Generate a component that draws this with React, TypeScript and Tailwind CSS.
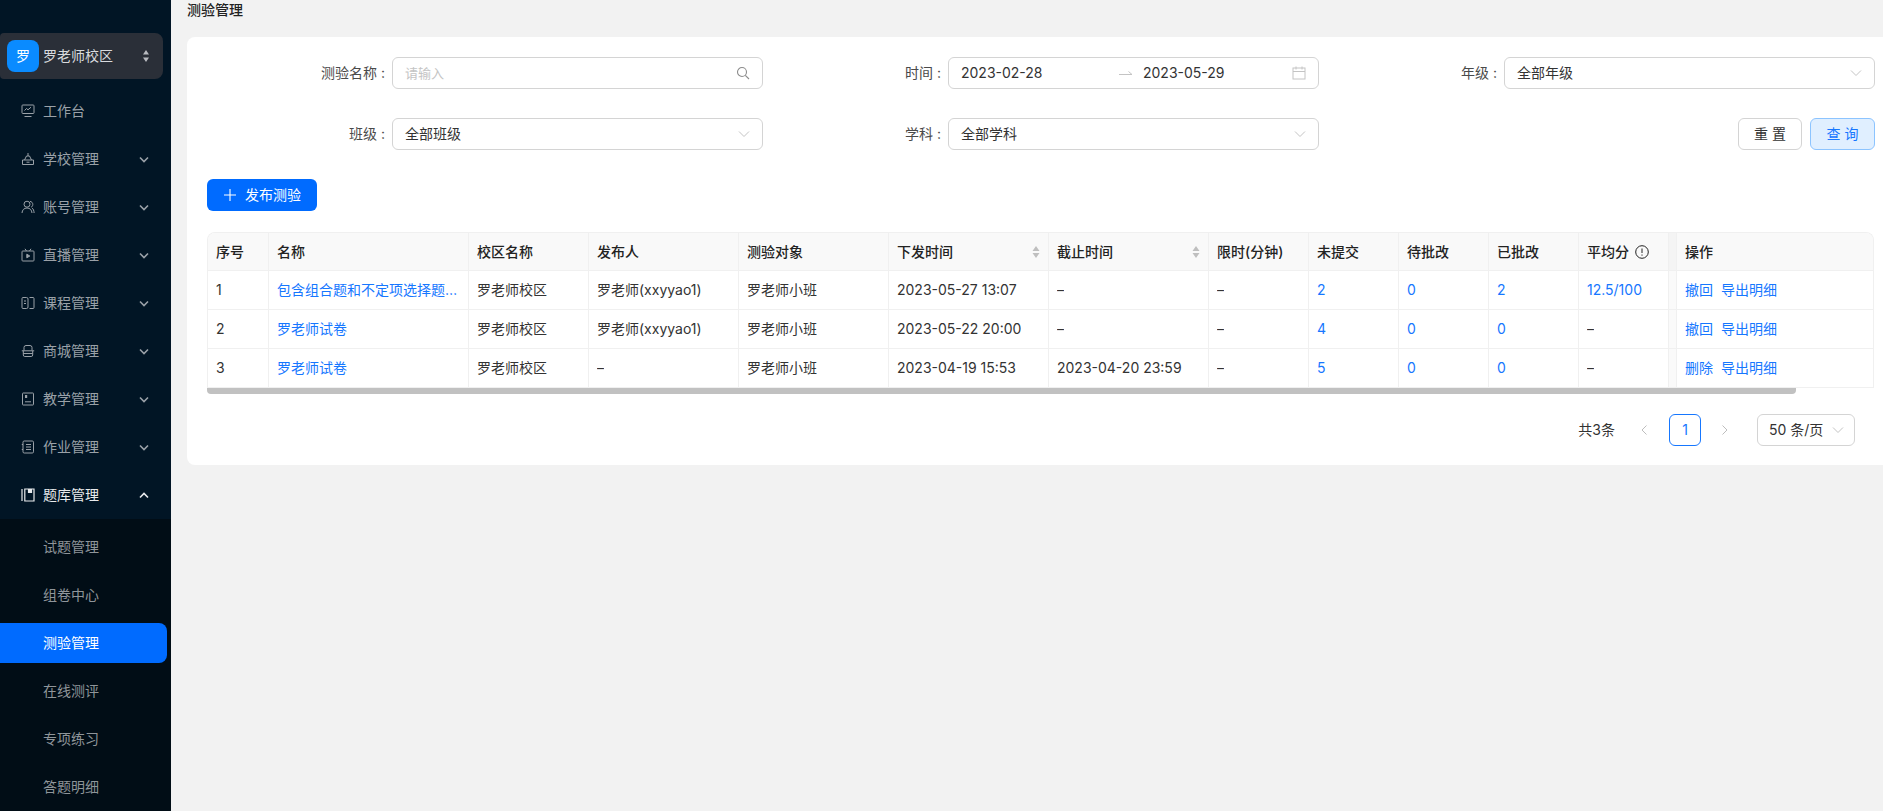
import { ReactNode } from "react";

const FONT = "font-['Inter','Noto_Sans_CJK_SC',sans-serif]";

const Ico = ({ children }: { children: ReactNode }) => (
  <svg width="14" height="14" viewBox="0 0 14 14" fill="none" stroke="currentColor" strokeWidth="1" className="shrink-0">
    {children}
  </svg>
);

const icons: Record<string, ReactNode> = {
  desk: (
    <Ico>
      <rect x="1" y="1" width="12" height="8.5" rx="0.8" />
      <path d="M3.5 6.5 5.5 4.5 7 5.8 10 3.2M3.5 12.5h7" />
    </Ico>
  ),
  school: (
    <Ico>
      <path d="M1.5 8h11v4.5h-11zM3.5 8 5.5 4h3l2 4M7 4V1M5.5 10.2h3" />
    </Ico>
  ),
  account: (
    <Ico>
      <circle cx="6" cy="4.2" r="3" />
      <path d="M1 13c.2-3 2-5 5-5s4.800 2 5 5M9 1.400c1.800.3 2.800 1.500 2.800 3s-.8 2.400-1.800 2.900M11 8c1.300.9 2 2.700 2.100 5" />
    </Ico>
  ),
  live: (
    <Ico>
      <rect x="1" y="3" width="12" height="10" rx="0.8" />
      <path d="M4 .8 5.500 3M10 .8 8.500 3" />
      <path d="M5.800 6.200 8.800 8 5.800 9.800z" fill="currentColor" />
    </Ico>
  ),
  course: (
    <Ico>
      <path d="M5.500 1.500H2a1 1 0 0 0-1 1v9a1 1 0 0 0 1 1h3.500a1.500 1.500 0 0 0 1.500-1.500V3A1.500 1.500 0 0 0 5.500 1.500zM8.500 1.500H12a1 1 0 0 1 1 1v9a1 1 0 0 1-1 1H8.500M3 5h2M3 7.500h2" />
    </Ico>
  ),
  shop: (
    <Ico>
      <path d="M3 6.500V3.500a2 2 0 0 1 2-2h4a2 2 0 0 1 2 2v3M.8 6.800h12.400M2.300 6.800v4.200a1.500 1.500 0 0 0 1.500 1.500h6.400a1.500 1.500 0 0 0 1.500-1.500V6.800M2.300 9.500h9.400" />
    </Ico>
  ),
  teach: (
    <Ico>
      <rect x="1.500" y="1" width="11" height="12" rx="0.6" />
      <path d="M4 9.800h6" />
      <rect x="4" y="3" width="2.200" height="3" fill="currentColor" stroke="none" />
    </Ico>
  ),
  homework: (
    <Ico>
      <rect x="2" y="1" width="10.500" height="12" rx="1.200" />
      <path d="M5 4.500h5M5 7h5M5 9.500h5M.8 4.500H2M.8 9.500H2" />
    </Ico>
  ),
  bank: (
    <Ico>
      <path d="M1 1v12" strokeWidth="1.200" />
      <path d="M3.800 1H13v12H3.800zM7.500 1v3.500h3V1" strokeWidth="1.200" />
      <path d="M7.500 1h3v3.500h-3z" fill="currentColor" stroke="none" />
    </Ico>
  ),
};

const Chevron = ({ up }: { up?: boolean }) => (
  <svg width="10" height="7" viewBox="0 0 10 7" fill="none" stroke="currentColor" strokeWidth="1.600" className="shrink-0">
    <path d={up ? "M1 5.500 5 1.500l4 4" : "M1 1.500l4 4 4-4"} />
  </svg>
);

const menus = [
  { label: "工作台", icon: "desk", noArrow: true },
  { label: "学校管理", icon: "school" },
  { label: "账号管理", icon: "account" },
  { label: "直播管理", icon: "live" },
  { label: "课程管理", icon: "course" },
  { label: "商城管理", icon: "shop" },
  { label: "教学管理", icon: "teach" },
  { label: "作业管理", icon: "homework" },
];

const subMenus = ["试题管理", "组卷中心", "测验管理", "在线测评", "专项练习", "答题明细"];

const Sidebar = () => (
  <div className="w-[171px] h-full shrink-0 bg-[#011525] flex flex-col overflow-hidden">
    <div className="mt-[33px] w-[163px] h-[56px] bg-[#2a2f38] rounded-r-lg rounded-l-sm flex items-center pl-[7px] pr-[13px]">
      <div className="w-8 h-8 rounded-lg bg-[#0a8bff] text-white text-sm flex items-center justify-center">罗</div>
      <span className="ml-1 flex-1 text-sm text-[#d9dbde]">罗老师校区</span>
      <svg width="8" height="14" viewBox="0 0 8 14" className="text-[#b8bbc0]" fill="currentColor">
        <path d="M4 1 7 5.500H1zM4 13 1 8.500h6z" />
      </svg>
    </div>
    <div className="mt-2">
      {menus.map((m) => (
        <div key={m.label} className="h-12 flex items-center pl-[21px] pr-[22px] text-[#9aa1a8]">
          {icons[m.icon]}
          <span className="ml-[8px] flex-1 text-sm">{m.label}</span>
          {!m.noArrow && <Chevron />}
        </div>
      ))}
      <div className="h-12 flex items-center pl-[21px] pr-[22px] text-[#e9ebed]">
        {icons.bank}
        <span className="ml-[8px] flex-1 text-sm">题库管理</span>
        <Chevron up />
      </div>
    </div>
    <div className="flex-1 bg-[#010d16] pt-1">
      {subMenus.map((s) =>
        s === "测验管理" ? (
          <div key={s} className="mt-1 mb-1 w-[167px] h-10 bg-[#006bff] rounded-r-lg flex items-center pl-[43px] text-sm text-white">
            {s}
          </div>
        ) : (
          <div key={s} className="h-12 flex items-center pl-[43px] text-sm text-[#8f959a]">
            {s}
          </div>
        )
      )}
    </div>
  </div>
);

const ChevronThin = () => (
  <svg width="12" height="8" viewBox="0 0 12 8" fill="none" stroke="#c4c4c4" strokeWidth="1" className="shrink-0">
    <path d="M1 1.500 6 6.500l5-5" />
  </svg>
);

const Field = ({ label, children }: { label: string; children: ReactNode }) => (
  <div className="flex items-center">
    <div className="w-[185px] pr-[7px] text-right text-sm text-[#4a4a4a]">{label}&nbsp;:</div>
    <div className="w-[371px] pr-[0px]">{children}</div>
  </div>
);

const Box = ({ children }: { children: ReactNode }) => (
  <div className="w-[371px] h-8 rounded-md border border-[#d4d4d4] bg-white flex items-center px-3 text-sm text-[#333]">
    {children}
  </div>
);

const SelectBox = ({ value }: { value: string }) => (
  <Box>
    <span className="flex-1">{value}</span>
    <ChevronThin />
  </Box>
);

const SortIcon = () => (
  <svg width="8" height="14" viewBox="0 0 8 14" fill="#bfbfbf" className="shrink-0">
    <path d="M4 1 7.500 6H.5zM4 13 .5 8h7z" />
  </svg>
);

const columns = [
  { title: "序号", w: "w-[60px]" },
  { title: "名称", w: "w-[200px]" },
  { title: "校区名称", w: "w-[120px]" },
  { title: "发布人", w: "w-[150px]" },
  { title: "测验对象", w: "w-[150px]" },
  { title: "下发时间", w: "w-[160px]", sort: true },
  { title: "截止时间", w: "w-[160px]", sort: true },
  { title: "限时(分钟)", w: "w-[100px]" },
  { title: "未提交", w: "w-[90px]" },
  { title: "待批改", w: "w-[90px]" },
  { title: "已批改", w: "w-[90px]" },
  { title: "平均分", w: "w-[90px]", info: true },
];

const rows = [
  ["1", "包含组合题和不定项选择题的试卷", "罗老师校区", "罗老师(xxyyao1)", "罗老师小班", "2023-05-27 13:07", "–", "–", "2", "0", "2", "12.5/100", "撤回"],
  ["2", "罗老师试卷", "罗老师校区", "罗老师(xxyyao1)", "罗老师小班", "2023-05-22 20:00", "–", "–", "4", "0", "0", "–", "撤回"],
  ["3", "罗老师试卷", "罗老师校区", "–", "罗老师小班", "2023-04-19 15:53", "2023-04-20 23:59", "–", "5", "0", "0", "–", "删除"],
];

const isLink = (col: number, val: string) => (col === 1 || col === 8 || col === 9 || col === 10 || col === 11) && val !== "–";

const Table = () => (
  <div className="relative mt-[21px] w-[1667px]">
    <div className="rounded-t-lg border-t border-l border-r border-[#f0f0f0] overflow-hidden">
      <div className="flex h-[38px] bg-[#f9f9f9] border-b border-[#f0f0f0]">
        {columns.map((c, i) => (
          <div key={c.title} className={`${c.w} shrink-0 flex items-center px-2 text-sm font-medium text-[#222] ${i > 0 ? "border-l border-[#f0f0f0]" : ""}`}>
            <span className="flex-1">
              {c.title}
              {c.info && (
                <svg width="14" height="14" viewBox="0 0 14 14" fill="none" stroke="#222" strokeWidth="1" className="inline ml-1.5 -mt-0.5">
                  <circle cx="7" cy="7" r="6.300" />
                  <path d="M7 3.500v4.500M7 9.500v1.200" />
                </svg>
              )}
            </span>
            {c.sort && <SortIcon />}
          </div>
        ))}
        <div className="w-[8px] shrink-0 border-l border-[#f0f0f0] bg-[#f4f4f4]" />
        <div className="flex-1 flex items-center px-2 text-sm font-medium text-[#222] border-l border-[#f0f0f0]">操作</div>
      </div>
      {rows.map((r) => (
        <div key={r[0]} className="flex h-[39px] border-b border-[#f0f0f0] bg-white">
          {columns.map((c, i) => (
            <div
              key={c.title}
              className={`${c.w} shrink-0 flex items-center px-2 text-sm ${isLink(i, r[i]) ? "text-[#1677ff]" : "text-[#333]"} ${i > 0 ? "border-l border-[#f0f0f0]" : ""}`}
            >
              <span className="truncate">{r[i]}</span>
            </div>
          ))}
          <div className="w-[8px] shrink-0 border-l border-[#f0f0f0] bg-[#fafafa]" />
          <div className="flex-1 flex items-center gap-2 px-2 text-sm text-[#1677ff] border-l border-[#f0f0f0]">
            <span>{r[12]}</span>
            <span>导出明细</span>
          </div>
        </div>
      ))}
    </div>
    <div className="w-[1589px] h-[6px] rounded-b-sm bg-[#c1c1c1]" />
  </div>
);

const Pagination = () => (
  <div className="mt-5 flex items-center justify-end pr-[19px] h-8 text-sm text-[#333]">
    <span>共3条</span>
    <svg width="8" height="12" viewBox="0 0 8 12" fill="none" stroke="#bdbdbd" strokeWidth="1" className="ml-[25px]">
      <path d="M6.500 1.500 2 6l4.500 4.500" />
    </svg>
    <div className="ml-[21px] w-8 h-8 rounded-md border border-[#1677ff] text-[#1677ff] flex items-center justify-center">1</div>
    <svg width="8" height="12" viewBox="0 0 8 12" fill="none" stroke="#bdbdbd" strokeWidth="1" className="ml-[20px]">
      <path d="M1.500 1.500 6 6l-4.500 4.500" />
    </svg>
    <div className="ml-[28px] w-[98px] h-8 rounded-md border border-[#d4d4d4] flex items-center pl-[11px] pr-[10px]">
      <span className="flex-1 whitespace-nowrap">50 条/页</span>
      <ChevronThin />
    </div>
  </div>
);

export default function App() {
  return (
    <div className={`${FONT} w-[1883px] h-[811px] flex overflow-hidden bg-[#f2f2f2]`}>
      <Sidebar />
      <div className="flex-1 min-w-0 pl-4">
        <div className="h-[37px] pt-[1px] text-sm leading-[18px] font-medium text-[#222]">测验管理</div>
        <div className="h-[428px] bg-white rounded-l-lg pl-5 pr-[9px] pt-5">
          <div className="grid grid-cols-3 gap-y-[29px] w-[1668px]">
            <Field label="测验名称">
              <Box>
                <span className="flex-1 text-[#c4c4c4] text-[13px]">请输入</span>
                <svg width="14" height="14" viewBox="0 0 14 14" fill="none" stroke="#8c8c8c" strokeWidth="1.100">
                  <circle cx="6" cy="6" r="4.500" />
                  <path d="M9.300 9.300 13 13" />
                </svg>
              </Box>
            </Field>
            <Field label="时间">
              <Box>
                <span className="w-[158px]">2023-02-28</span>
                <svg width="14" height="8" viewBox="0 0 14 8" fill="none" stroke="#c4c4c4" strokeWidth="1">
                  <path d="M0 5.500h13L9.500 2.500" />
                </svg>
                <span className="ml-[10px] flex-1">2023-05-29</span>
                <svg width="14" height="14" viewBox="0 0 14 14" fill="none" stroke="#c4c4c4" strokeWidth="1">
                  <rect x="1" y="2" width="12" height="11" />
                  <path d="M1 5.500h12M4 .5v3M10 .5v3" />
                </svg>
              </Box>
            </Field>
            <Field label="年级">
              <SelectBox value="全部年级" />
            </Field>
            <Field label="班级">
              <SelectBox value="全部班级" />
            </Field>
            <Field label="学科">
              <SelectBox value="全部学科" />
            </Field>
            <div className="flex items-center justify-end gap-2">
              <button className="w-16 h-8 rounded-md border border-[#d4d4d4] bg-white text-sm text-[#333]">重 置</button>
              <button className="w-[65px] h-8 rounded-md border border-[#8cc4ff] bg-[#e0efff] text-sm text-[#1677ff]">查 询</button>
            </div>
          </div>
          <button className="mt-[29px] w-[110px] h-8 rounded-md bg-[#006bff] text-white text-sm flex items-center pl-[17px]">
            <svg width="12" height="12" viewBox="0 0 12 12" fill="none" stroke="#ffffff" strokeWidth="1.100">
              <path d="M6 0v12M0 6h12" />
            </svg>
            <span className="ml-[9px]">发布测验</span>
          </button>
          <Table />
          <Pagination />
        </div>
      </div>
    </div>
  );
}
